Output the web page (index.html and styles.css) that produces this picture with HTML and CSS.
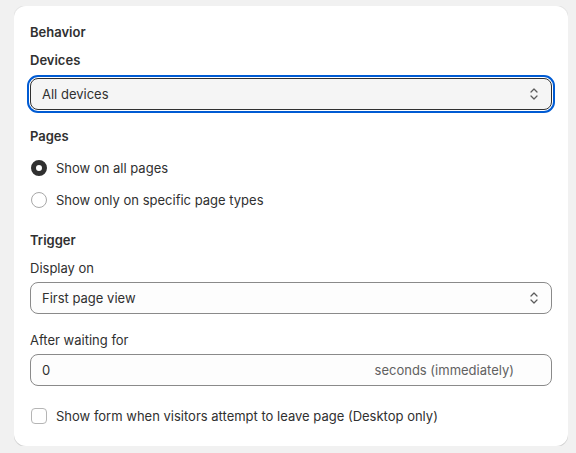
FILE: index.html
```html
<!DOCTYPE html>
<html>
<head>
<meta charset="utf-8">
<link rel="stylesheet" href="styles.css">
</head>
<body>
<div class="card">
  <div class="heading">Behavior</div>
  <div class="label strong mt8">Devices</div>
  <div class="select focused mt8">
    <span>All devices</span>
    <svg class="chev" viewBox="0 0 10 14" width="10" height="14"><path d="M2 5 L5 2 L8 5 M2 9 L5 12 L8 9" fill="none" stroke="#5c5c5c" stroke-width="1.25" stroke-linecap="round" stroke-linejoin="round"/></svg>
  </div>
  <div class="label strong mt16">Pages</div>
  <div class="choice mt12"><span class="radio checked"></span><span>Show on all pages</span></div>
  <div class="choice mt12"><span class="radio"></span><span>Show only on specific page types</span></div>
  <div class="label strong mt20">Trigger</div>
  <div class="label mt8">Display on</div>
  <div class="select mt4">
    <span>First page view</span>
    <svg class="chev" viewBox="0 0 10 14" width="10" height="14"><path d="M2 5 L5 2 L8 5 M2 9 L5 12 L8 9" fill="none" stroke="#5c5c5c" stroke-width="1.25" stroke-linecap="round" stroke-linejoin="round"/></svg>
  </div>
  <div class="label mt16">After waiting for</div>
  <div class="input mt4">
    <span>0</span>
    <span class="suffix">seconds (immediately)</span>
  </div>
  <div class="choice mt20"><span class="checkbox"></span><span>Show form when visitors attempt to leave page (Desktop only)</span></div>
</div>
</body>
</html>
```

FILE: styles.css
```css
html, body {
  background: #f1f1f1;
}
body {
  margin: 6px 8px 0 14px;
  font-family: Inter, "Noto Sans", "Liberation Sans", sans-serif;
  font-size: 13px;
  line-height: 20px;
  color: #303030;
}
.card {
  background: #ffffff;
  border-radius: 12px;
  padding: 16px 16px 20px 16px;
  box-shadow: 0 1px 0 0 rgba(26, 26, 26, 0.1), 0 0 0 1px rgba(26, 26, 26, 0.05);
}
.heading, .strong {
  font-weight: 600;
}
.mt4 { margin-top: 4px; }
.mt8 { margin-top: 8px; }
.mt12 { margin-top: 12px; }
.mt16 { margin-top: 16px; }
.mt20 { margin-top: 20px; }
.select, .input {
  box-sizing: border-box;
  height: 32px;
  border: 1px solid #8a8a8a;
  border-radius: 8px;
  background: #fdfdfd;
  display: flex;
  align-items: center;
  justify-content: space-between;
  padding: 0 12px 0 11px;
}
.select.focused {
  background: #f5f5f5;
  border-color: #303030;
  outline: 2px solid #005bd3;
  outline-offset: 1px;
}
.chev {
  display: block;
}
.input {
  padding-right: 37px;
}
.suffix {
  color: #616161;
}
.choice {
  display: flex;
  align-items: center;
  gap: 9px;
  height: 20px;
  padding-left: 1px;
}
.radio {
  box-sizing: border-box;
  width: 16px;
  height: 16px;
  border-radius: 50%;
  border: 1px solid #a8a8a8;
  background: #fff;
  flex: none;
}
.radio.checked {
  border: 5px solid #303030;
}
.checkbox {
  box-sizing: border-box;
  width: 16px;
  height: 16px;
  border-radius: 4px;
  border: 1px solid #b5b5b5;
  background: #fff;
  flex: none;
}
```
